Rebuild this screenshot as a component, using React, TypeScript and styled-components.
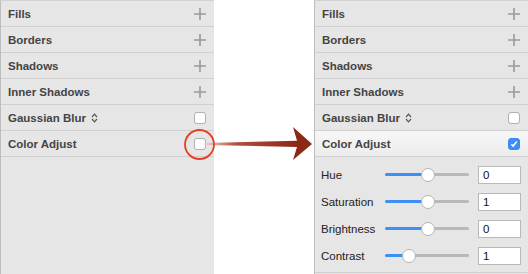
import React from 'react';
import styled, { createGlobalStyle } from 'styled-components';

const Global = createGlobalStyle`
  html, body { margin: 0; padding: 0; background: #ffffff; }
  body { font-family: "Liberation Sans", Arial, sans-serif; }
`;

// Whole canvas: two inspector panels side by side with whitespace between
const Stage = styled.div`
  position: relative;
  width: 528px;
  height: 274px;
  display: flex;
  justify-content: space-between;
  overflow: hidden;
`;

const Panel = styled.div`
  width: 214px;
  height: 274px;
  background: #e6e6e6;
  border-left: 1px solid #bdbdbd;
  border-top: 1px solid #d2d2d2;
  box-sizing: border-box;
  display: flex;
  flex-direction: column;
`;

const Row = styled.div<{ $active?: boolean }>`
  height: 25px;
  flex: none;
  border-bottom: 1px solid #d0d0d0;
  display: flex;
  align-items: center;
  justify-content: space-between;
  padding: 0 8px 0 7px;
  background: ${({ $active }) =>
    $active ? 'linear-gradient(#f7f7f7, #ececec)' : 'transparent'};
`;

const Title = styled.span`
  font-size: 11.5px;
  font-weight: 700;
  color: #444;
  display: flex;
  align-items: center;
  gap: 5px;
`;

const Checkbox = styled.span<{ $checked?: boolean }>`
  width: 12px;
  height: 12px;
  box-sizing: border-box;
  border-radius: 3px;
  border: 1px solid ${({ $checked }) => ($checked ? '#3a8bf2' : '#b0b0b0')};
  background: ${({ $checked }) => ($checked ? '#3d8ef5' : '#ffffff')};
  display: flex;
  align-items: center;
  justify-content: center;
`;

// Expanded Color Adjust controls
const SubPanel = styled.div`
  padding: 4px 0 3px;
  border-bottom: 1px solid #cfcfcf;
  display: flex;
  flex-direction: column;
`;

const SubRow = styled.div`
  height: 27px;
  display: grid;
  grid-template-columns: 55px 84px 43px;
  column-gap: 9px;
  align-items: center;
  padding-left: 6px;
`;

const SubLabel = styled.span`
  font-size: 11.5px;
  color: #222;
  white-space: nowrap;
`;

const Track = styled.div`
  position: relative;
  height: 3px;
  border-radius: 2px;
  background: #b8b8b8;
`;

const Thumb = styled.span`
  position: absolute;
  top: 50%;
  width: 12px;
  height: 12px;
  margin: -7px 0 0 -7px;
  border-radius: 50%;
  background: #ffffff;
  border: 1px solid #b4b4b4;
`;

const ValueBox = styled.div`
  height: 18px;
  box-sizing: border-box;
  border: 1px solid #b9b9b9;
  background: #ffffff;
  font-size: 11.5px;
  color: #111;
  padding-left: 4px;
  display: flex;
  align-items: center;
`;

// Red annotation overlay
const Overlay = styled.svg`
  position: absolute;
  left: 0;
  top: 0;
  pointer-events: none;
`;

const Plus = () => (
  <svg width="12" height="12" viewBox="0 0 12 12">
    <path d="M6 0v12M0 6h12" stroke="#9a9a9a" strokeWidth="1.6" />
  </svg>
);

const UpDown = () => (
  <svg width="7" height="10" viewBox="0 0 7 10">
    <path d="M1 4l2.5-2.8L6 4M1 6l2.5 2.8L6 6" fill="none" stroke="#555" strokeWidth="1.2" />
  </svg>
);

const Check = () => (
  <svg width="8" height="8" viewBox="0 0 8 8">
    <path d="M1.3 4.2l1.8 1.9L6.8 1.6" fill="none" stroke="#fff" strokeWidth="1.5" />
  </svg>
);

const Slider: React.FC<{ value: number }> = ({ value }) => (
  <Track style={{ background: `linear-gradient(90deg, #3d8ef5 ${value}%, #b8b8b8 ${value}%)` }}>
    <Thumb style={{ left: `${value}%` }} />
  </Track>
);

const sections = ['Fills', 'Borders', 'Shadows', 'Inner Shadows'];

const adjustments = [
  { name: 'Hue', pos: 51, value: '0' },
  { name: 'Saturation', pos: 51, value: '1' },
  { name: 'Brightness', pos: 51, value: '0' },
  { name: 'Contrast', pos: 29, value: '1' },
];

const Inspector: React.FC<{ expanded?: boolean }> = ({ expanded }) => (
  <Panel>
    {sections.map(s => (
      <Row key={s}>
        <Title>{s}</Title>
        <Plus />
      </Row>
    ))}
    <Row>
      <Title>
        Gaussian Blur <UpDown />
      </Title>
      <Checkbox />
    </Row>
    <Row $active={expanded}>
      <Title>Color Adjust</Title>
      <Checkbox $checked={expanded}>{expanded && <Check />}</Checkbox>
    </Row>
    {expanded && (
      <SubPanel>
        {adjustments.map(a => (
          <SubRow key={a.name}>
            <SubLabel>{a.name}</SubLabel>
            <Slider value={a.pos} />
            <ValueBox>{a.value}</ValueBox>
          </SubRow>
        ))}
      </SubPanel>
    )}
  </Panel>
);

export default function App() {
  return (
    <>
      <Global />
      <Stage>
        <Inspector />
        <Inspector expanded />
        <Overlay width="528" height="274" viewBox="0 0 528 274">
          <defs>
            <linearGradient id="shaft" x1="204" y1="0" x2="296" y2="0" gradientUnits="userSpaceOnUse">
              <stop offset="0" stopColor="#f3d6cf" />
              <stop offset="0.35" stopColor="#b0503c" />
              <stop offset="1" stopColor="#8c2816" />
            </linearGradient>
          </defs>
          <polygon points="204,143 297,140.8 297,147 204,145" fill="url(#shaft)" />
          <polygon points="293,127 312,144 293,160 297,147 297,140.8" fill="#8c2816" />
          <circle cx="199.5" cy="144.5" r="14.5" fill="none" stroke="#e43f26" strokeWidth="1.8" />
        </Overlay>
      </Stage>
    </>
  );
}
